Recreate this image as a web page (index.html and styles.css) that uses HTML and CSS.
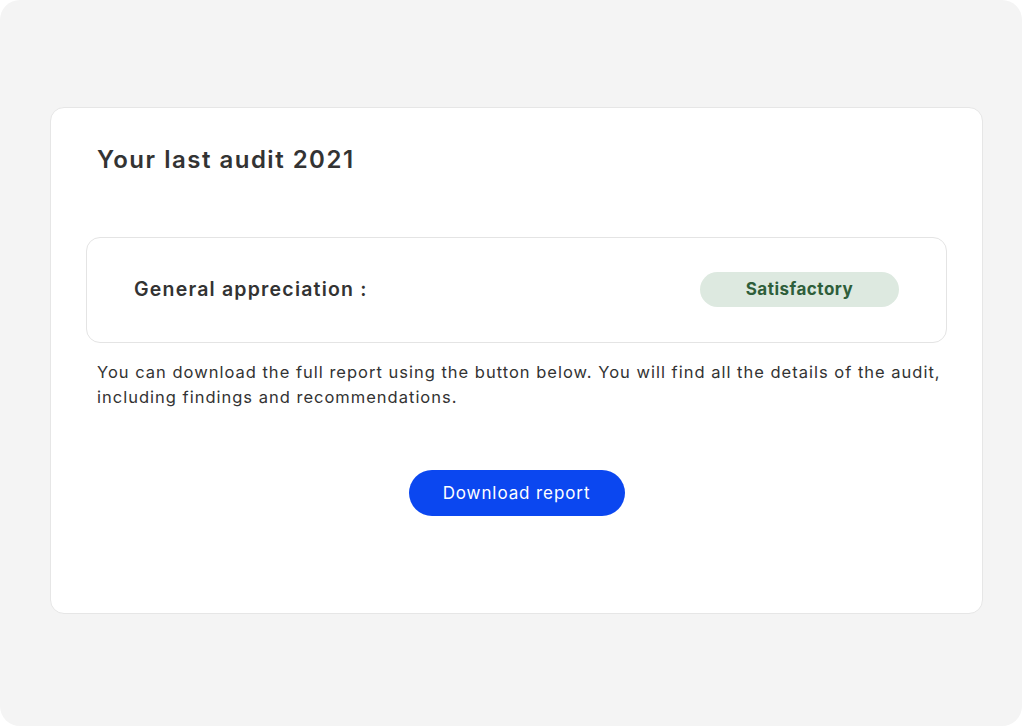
FILE: index.html
```html
<!DOCTYPE html>
<html lang="en">
<head>
  <meta charset="UTF-8" />
  <meta name="viewport" content="width=device-width,initial-scale=1.0" />
  <title>Your last audit</title>
  <link rel="stylesheet" href="styles.css">
</head>
<body>
  <div class="frame">
    <div class="audit-card">
      <h1 class="audit-title">Your last audit 2021</h1>
      <div class="appreciation">
        <span class="appreciation-label">General appreciation :</span>
        <span class="badge">Satisfactory</span>
      </div>
      <p class="audit-text">You can download the full report using the button below. You will find all the details of the audit, including findings and recommendations.</p>
      <div class="actions">
        <button class="download-btn">Download report</button>
      </div>
    </div>
  </div>
</body>
</html>
```

FILE: styles.css
```css
body {
  margin: 0;
  background: #fff;
  font-family: Inter, "Open Sans", Arial, sans-serif;
  color: #333;
}
.frame {
  width: 1022px;
  height: 726px;
  background: #f4f4f4;
  border-radius: 20px;
  padding: 107px 40px 0 50px;
  box-sizing: border-box;
}
.audit-card {
  width: 933px;
  height: 507px;
  box-sizing: border-box;
  background: #fff;
  border: 1px solid #e6e6e6;
  border-radius: 14px;
  padding: 34px 35px 0 35px;
}
.audit-title {
  margin: 0 0 59px 0;
  padding-left: 11px;
  font-size: 24px;
  line-height: 36px;
  font-weight: 600;
  letter-spacing: 1.5px;
  color: #333;
}
.appreciation {
  display: flex;
  align-items: center;
  justify-content: space-between;
  height: 102px;
  border: 1px solid #e4e4e4;
  border-radius: 14px;
  padding: 0 47px 2px 47px;
}
.appreciation-label {
  font-size: 19.5px;
  font-weight: 600;
  letter-spacing: 1.2px;
  color: #333;
}
.badge {
  width: 199px;
  height: 35px;
  line-height: 35px;
  text-align: center;
  border-radius: 18px;
  background: #dde9e0;
  color: #2e5e3a;
  font-size: 17px;
  font-weight: 700;
  letter-spacing: 0.5px;
}
.audit-text {
  margin: 17px 0 0 0;
  padding-left: 11px;
  max-width: 860px;
  font-size: 16.5px;
  line-height: 25px;
  letter-spacing: 1px;
  color: #333;
}
.actions {
  display: flex;
  justify-content: center;
  margin-top: 60px;
}
.download-btn {
  width: 216px;
  height: 46px;
  border: none;
  border-radius: 23px;
  background: #0b47f0;
  color: #fff;
  font-family: inherit;
  font-size: 17px;
  letter-spacing: 0.9px;
  cursor: pointer;
}
```
